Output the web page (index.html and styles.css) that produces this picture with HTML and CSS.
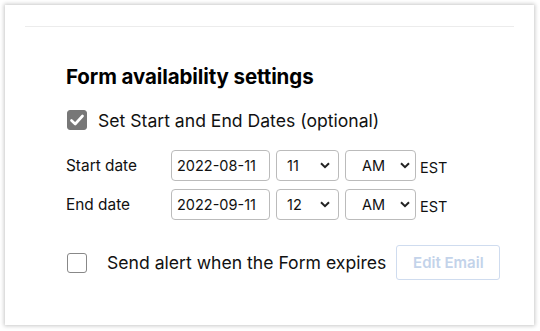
FILE: index.html
```html
<!DOCTYPE html>
<html>
<head>
<meta charset="utf-8">
<link rel="stylesheet" href="styles.css">
</head>
<body>
<div class="card">
  <hr class="rule">
  <section class="settings">
    <h2 class="title">Form availability settings</h2>
    <label class="check-row">
      <span class="box checked">
        <svg width="14" height="12" viewBox="0 0 14 12"><path d="M1.5 6.5 L5.2 10 L12.5 2" fill="none" stroke="#fff" stroke-width="2.6" stroke-linecap="round" stroke-linejoin="round"/></svg>
      </span>
      <span class="check-text">Set Start and End Dates (optional)</span>
    </label>
    <div class="date-grid">
      <div class="date-label">Start date</div>
      <div class="field date">2022-08-11</div>
      <div class="field sel hour"><span>11</span><svg class="chev" width="10" height="7" viewBox="0 0 10 7"><path d="M1 1.2 L5 5.2 L9 1.2" fill="none" stroke="#222" stroke-width="2"/></svg></div>
      <div class="field sel ampm"><span>AM</span><svg class="chev" width="10" height="7" viewBox="0 0 10 7"><path d="M1 1.2 L5 5.2 L9 1.2" fill="none" stroke="#222" stroke-width="2"/></svg></div>
      <div class="tz">EST</div>

      <div class="date-label">End date</div>
      <div class="field date">2022-09-11</div>
      <div class="field sel hour"><span>12</span><svg class="chev" width="10" height="7" viewBox="0 0 10 7"><path d="M1 1.2 L5 5.2 L9 1.2" fill="none" stroke="#222" stroke-width="2"/></svg></div>
      <div class="field sel ampm"><span>AM</span><svg class="chev" width="10" height="7" viewBox="0 0 10 7"><path d="M1 1.2 L5 5.2 L9 1.2" fill="none" stroke="#222" stroke-width="2"/></svg></div>
      <div class="tz">EST</div>
    </div>
    <div class="alert-row">
      <span class="box"></span>
      <span class="alert-text">Send alert when the Form expires</span>
      <button class="edit-btn" disabled>Edit Email</button>
    </div>
  </section>
</div>
</body>
</html>
```
FILE: styles.css
```css
* { box-sizing: border-box; }
html, body { margin: 0; padding: 0; background: #fff; }
body {
  font-family: Inter, "Noto Sans", sans-serif;
  color: #111;
  width: 540px;
  height: 331px;
  padding: 5px 6px 6px 5px;
}
.card {
  width: 529px;
  height: 320px;
  background: #fff;
  box-shadow: 0 0 4px 1px rgba(0,0,0,0.22);
  padding: 21px 20px 0 20px;
}
.rule {
  margin: 0;
  border: 0;
  border-top: 1px solid #ececec;
}
.settings {
  padding: 37px 0 0 41px;
}
.title {
  margin: 0;
  font-size: 20.5px;
  font-weight: 700;
  letter-spacing: -0.1px;
  line-height: 26px;
  color: #000;
}
.check-row {
  display: flex;
  align-items: center;
  margin-top: 19px;
  height: 22px;
}
.box {
  width: 20px;
  height: 20px;
  border: 1.5px solid #888;
  border-radius: 3px;
  display: flex;
  align-items: center;
  justify-content: center;
  margin-left: 1px;
  flex: none;
}
.box.checked {
  background: #777;
  border-color: #777;
}
.check-text {
  margin-left: 11px;
  font-size: 17.6px;
  color: #111;
}
.date-grid {
  display: grid;
  grid-template-columns: 99px 99px 63px 71px auto;
  column-gap: 6px;
  row-gap: 8px;
  align-items: center;
  margin-top: 19px;
}
.date-label {
  font-size: 15.4px;
  color: #111;
}
.field {
  height: 31px;
  border: 1px solid #bbb;
  border-radius: 4px;
  font-size: 14.5px;
  display: flex;
  align-items: center;
  color: #111;
}
.date { padding-left: 5px; }
.sel { justify-content: space-between; }
.hour { padding: 0 8px 0 10px; }
.ampm { padding: 0 5px 0 16px; }
.chev { display: block; }
.tz {
  font-size: 14.5px;
  margin-left: -2px;
  padding-top: 4px;
}
.alert-row {
  display: flex;
  align-items: center;
  margin-top: 25px;
}
.alert-text {
  margin-left: 20px;
  font-size: 17.6px;
  color: #111;
}
.edit-btn {
  margin-left: 10px;
  width: 104px;
  height: 35px;
  border: 1px solid #cfdcef;
  border-radius: 3px;
  background: #fff;
  color: #c3d3ea;
  font-family: inherit;
  font-size: 15px;
  font-weight: 600;
}
```
